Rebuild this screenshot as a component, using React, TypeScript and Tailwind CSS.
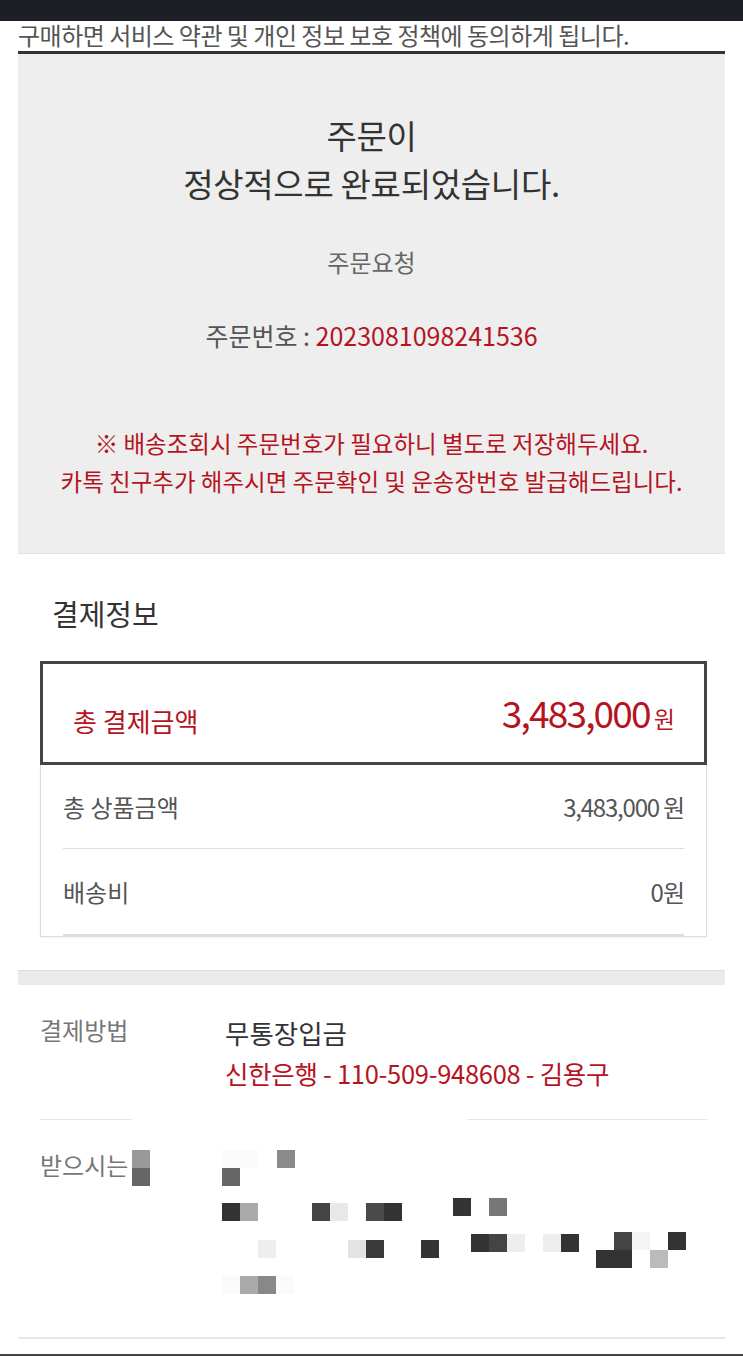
const font = "font-['Noto_Sans_CJK_KR','Noto_Sans',sans-serif]";

type Block = { x: number; y: number; w?: number; c: string };

// blurred address, drawn as a mosaic
const mosaic: Block[] = [
  { x: 2, y: 2, w: 36, c: '#fafafa' },
  { x: 57, y: 2, c: '#8a8a8a' },
  { x: 2, y: 20, c: '#666666' },
  { x: 2, y: 55, c: '#333333' },
  { x: 20, y: 55, c: '#aaaaaa' },
  { x: 92, y: 55, c: '#444444' },
  { x: 110, y: 55, c: '#e8e8e8' },
  { x: 146, y: 55, c: '#4a4a4a' },
  { x: 164, y: 55, c: '#333333' },
  { x: 233, y: 50, c: '#333333' },
  { x: 269, y: 50, c: '#777777' },
  { x: 38, y: 92, c: '#eeeeee' },
  { x: 128, y: 92, c: '#e3e3e3' },
  { x: 146, y: 92, c: '#3a3a3a' },
  { x: 201, y: 92, c: '#333333' },
  { x: 251, y: 86, c: '#333333' },
  { x: 269, y: 86, c: '#444444' },
  { x: 287, y: 86, c: '#eeeeee' },
  { x: 323, y: 86, c: '#eeeeee' },
  { x: 341, y: 86, c: '#333333' },
  { x: 394, y: 84, c: '#444444' },
  { x: 412, y: 84, c: '#f5f5f5' },
  { x: 448, y: 84, c: '#333333' },
  { x: 376, y: 102, w: 36, c: '#333333' },
  { x: 430, y: 102, c: '#bbbbbb' },
  { x: 2, y: 128, c: '#fafafa' },
  { x: 20, y: 128, c: '#aaaaaa' },
  { x: 38, y: 128, c: '#888888' },
  { x: 56, y: 128, c: '#fafafa' },
];

function Mosaic() {
  return (
    <svg width="470" height="148" viewBox="0 0 470 148" className="block">
      {mosaic.map((b, i) => (
        <rect key={i} x={b.x} y={b.y} width={b.w ?? 18} height="18" fill={b.c} />
      ))}
    </svg>
  );
}

export default function App() {
  return (
    <div className={`w-[743px] h-[1356px] bg-white overflow-hidden ${font}`}>
      {/* status bar */}
      <div className="h-[21px] bg-[#1d1e26]" />

      {/* agreement line (scrolled under the bar) */}
      <div className="h-[30px] px-[18px]">
        <p className="text-[24px] leading-[27px] tracking-[-0.5px] text-[#555] whitespace-nowrap">
          구매하면 서비스 약관 및 개인 정보 보호 정책에 동의하게 됩니다.
        </p>
      </div>
      <div className="mx-[18px] h-[3px] bg-[#333]" />

      {/* order complete */}
      <div className="mx-[18px] h-[500px] bg-[#eeeeee] border-b border-[#e2e2e2] pt-[57px] text-center">
        <h1 className="text-[33px] leading-[48px] text-[#333] tracking-[-0.3px]">
          주문이
          <br />
          정상적으로 완료되었습니다.
        </h1>
        <p className="mt-[40px] text-[24px] leading-[30px] text-[#666]">주문요청</p>
        <p className="mt-[43px] text-[25px] leading-[30px] text-[#555]">
          주문번호 : <span className="text-[#b5141f]">2023081098241536</span>
        </p>
        <p className="mt-[74px] text-[23.5px] leading-[38px] text-[#b5141f]">
          ※ 배송조회시 주문번호가 필요하니 별도로 저장해두세요.
          <br />
          카톡 친구추가 해주시면 주문확인 및 운송장번호 발급해드립니다.
        </p>
      </div>

      {/* payment info */}
      <div className="mx-[18px] pl-[22px] pr-[18px]">
        <h2 className="mt-[41px] pl-[12px] text-[29px] leading-[36px] text-[#333]">결제정보</h2>
        <div className="mt-[30px] h-[104px] border-[3px] border-[#444] flex items-center justify-between pl-[30px] pr-[29px]">
          <span className="pt-[14px] text-[26px] text-[#b5141f]">총 결제금액</span>
          <span className="flex items-baseline gap-[4px] text-[#b5141f]">
            <span className="text-[37px] tracking-[-1.8px]">3,483,000</span>
            <span className="text-[23px]">원</span>
          </span>
        </div>
        <div className="border-x border-b border-[#dddddd] px-[22px] shadow-[0_1px_2px_rgba(0,0,0,0.05)]">
          <div className="h-[84px] flex items-center justify-between border-b border-[#dddddd]">
            <span className="text-[24px] text-[#555]">총 상품금액</span>
            <span className="text-[24px] text-[#555] tracking-[-1.2px]">3,483,000 원</span>
          </div>
          <div className="h-[87px] flex items-center justify-between border-b-2 border-[#dddddd]">
            <span className="text-[24px] text-[#555]">배송비</span>
            <span className="text-[24px] text-[#555] tracking-[-1px]">0원</span>
          </div>
        </div>
      </div>

      <div className="mx-[18px] mt-[33px] h-[15px] bg-[#ebebeb] border-t border-[#dddddd]" />

      {/* payment method */}
      <div className="mx-[18px] pl-[22px] pr-[18px]">
        <div className="pt-[28px] flex">
          <span className="w-[185px] text-[24px] leading-[34px] text-[#777]">결제방법</span>
          <div className="leading-[40px]">
            <p className="text-[26.5px] text-[#333]">무통장입금</p>
            <p className="text-[25.5px] text-[#b5141f] tracking-[-0.3px]">신한은행 - 110-509-948608 - 김용구</p>
          </div>
        </div>
        <div className="mt-[26px] flex h-px">
          <div className="w-[92px] bg-[#e5e5e5]" />
          <div className="ml-[335px] flex-1 bg-[#e5e5e5]" />
        </div>

        <div className="mt-[28px] flex">
          <div className="w-[180px] flex items-start">
            <span className="text-[24px] leading-[34px] text-[#777]">받으시는</span>
            <span className="ml-[4px] mt-[2px] flex flex-col">
              <span className="w-[18px] h-[18px] bg-[#999]" />
              <span className="w-[18px] h-[18px] bg-[#666]" />
            </span>
          </div>
          <Mosaic />
        </div>
      </div>

      <div className="mx-[18px] mt-[41px] h-[2px] bg-[#e6e6e6]" />
      <div className="mt-[15px] h-[4px] bg-[#444]" />
    </div>
  );
}
